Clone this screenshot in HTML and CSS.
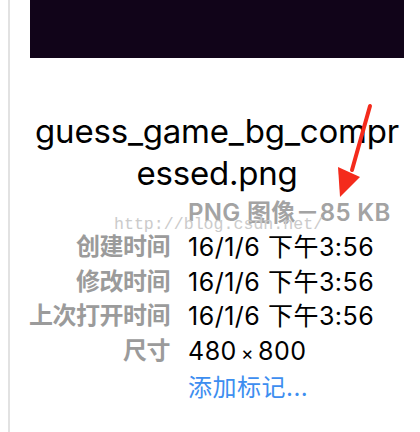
FILE: index.html
```html
<!DOCTYPE html>
<html lang="zh-CN">
<head>
  <meta charset="UTF-8" />
  <title>guess_game_bg_compressed.png</title>
  <link rel="stylesheet" href="styles.css">
</head>
<body>
  <div class="panel">
    <!-- 预览图 -->
    <div class="preview"></div>

    <!-- 文件名 -->
    <h1 class="file-name">guess_game_bg_compr<br>essed.png</h1>

    <!-- 信息 -->
    <div class="info">
      <span></span>
      <span class="kind">PNG 图像－85 KB</span>

      <span class="label">创建时间</span>
      <span class="value">16/1/6 下午3:56</span>

      <span class="label">修改时间</span>
      <span class="value">16/1/6 下午3:56</span>

      <span class="label">上次打开时间</span>
      <span class="value">16/1/6 下午3:56</span>

      <span class="label">尺寸</span>
      <span class="value">480<span class="times">×</span>800</span>

      <span></span>
      <a href="#" class="add-tag">添加标记...</a>
    </div>

    <!-- 水印 -->
    <div class="watermark">http://blog.csdn.net/</div>

    <!-- 红色箭头 -->
    <svg class="arrow" width="60" height="110" viewBox="0 0 60 110">
      <line x1="50" y1="6" x2="32" y2="70" stroke="#f42b1c" stroke-width="4" stroke-linecap="round"/>
      <polygon points="18,67 40,77 20,97" fill="#f42b1c"/>
    </svg>
  </div>
</body>
</html>
```

FILE: styles.css
```css
body {
  margin: 0;
  padding-left: 8px;
  background: #fff;
  font-family: Inter, "Noto Sans CJK SC", sans-serif;
}

.panel {
  position: relative;
  height: 432px;
  border-left: 2px solid #e2e2e2;
}

.preview {
  width: 374px;
  height: 58px;
  margin-left: 20px;
  background: #110419;
}

.file-name {
  width: 374px;
  margin: 52px 0 0 20px;
  font-size: 33px;
  font-weight: normal;
  line-height: 42px;
  letter-spacing: -0.2px;
  color: #000;
  text-align: center;
}

.info {
  display: grid;
  grid-template-columns: 160px auto;
  column-gap: 18px;
  margin-top: 2px;
  font-size: 24px;
  line-height: 34.4px;
}

.label {
  text-align: right;
  color: #9b9b9b;
  font-weight: 600;
  letter-spacing: -0.5px;
}

.kind {
  color: #a3a3a3;
  font-weight: 600;
  letter-spacing: 0.3px;
}

.value {
  color: #000;
  font-size: 25px;
  letter-spacing: 0.5px;
}

.times {
  margin: 0 4px;
  font-size: 19px;
}

.add-tag {
  color: #3d8ef0;
  text-decoration: none;
  letter-spacing: 0.5px;
}

.watermark {
  position: absolute;
  left: 104px;
  top: 215px;
  font-family: "Liberation Mono", monospace;
  font-size: 16.6px;
  color: #cbcbcb;
}

.arrow {
  position: absolute;
  left: 310px;
  top: 100px;
}
```
